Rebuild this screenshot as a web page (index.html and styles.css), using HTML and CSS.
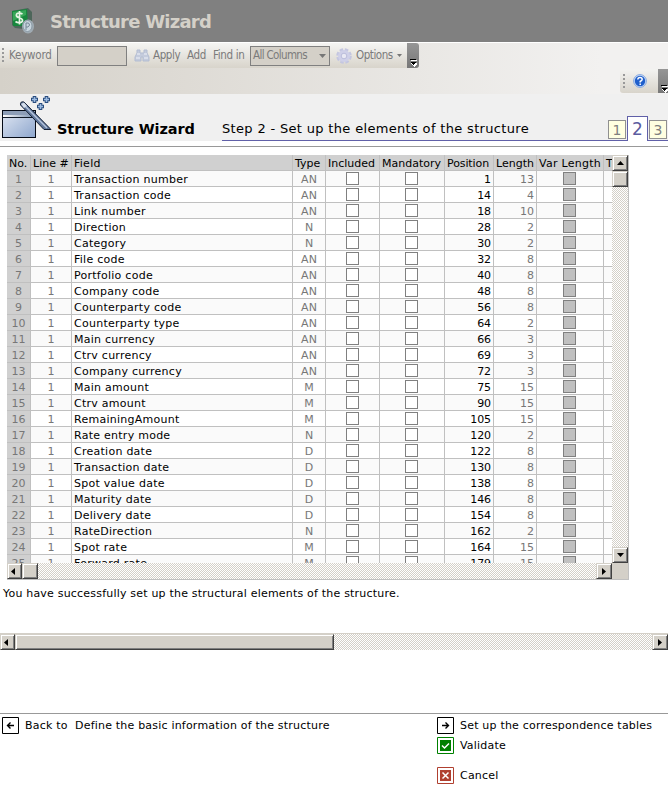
FILE: index.html
```html
<!DOCTYPE html>
<html lang="en">
<head>
<meta charset="utf-8">
<title>Structure Wizard</title>
<link rel="stylesheet" href="styles.css">
</head>
<body>
<header class="titlebar">
  <svg class="logo" width="24" height="27" viewBox="0 0 24 27">
    <path d="M1 3L17 0L21 4V22L4 20L1 17Z" fill="#4d665a"/>
    <path d="M1 3L16 1L17 18L2 18Z" fill="#17873d"/>
    <path d="M2 4L15 2L15 7L2 13Z" fill="#37a657"/>
    <path d="M11.500 6C8 4 4.500 5.500 5.500 8C6.500 10 11 9.500 11.500 12C12 15 7 15.500 4.500 13.500M8.500 3V16.500" fill="none" stroke="#e7f5e5" stroke-width="1.700"/>
    <ellipse cx="17" cy="18.500" rx="6" ry="7" fill="#9faab2"/>
    <ellipse cx="16.500" cy="18" rx="4.500" ry="5.500" fill="#c8d5de" stroke="#8b9aa6"/>
    <path d="M15 22V15H17.500Q20 17 17 19H15" fill="none" stroke="#758695"/>
  </svg>
  <h1>Structure Wizard</h1>
</header>
<div class="toolbars">
  <div class="toolbar">
    <i class="grip"></i>
    <span class="tt keyword">Keyword</span>
    <span class="input"></span>
    <svg class="binoculars" width="16" height="14" viewBox="0 0 16 14">
      <path d="M1 12V8L3 4V1H6V4H10V1H13V4L15 8V12H9V8H7V12Z" fill="#c4cbdc" stroke="#b3bdd2"/>
      <path d="M3 5H6M10 5H13M2 9H6M10 9H14" stroke="#eef1f8"/>
    </svg>
    <span class="tt apply">Apply</span>
    <span class="tt add">Add</span>
    <span class="tt find">Find in</span>
    <span class="select"><span class="tt allcols">All Columns</span><svg width="7" height="4"><path d="M0 0H7L3.500 4Z" fill="#777"/></svg></span>
    <svg class="gear" width="16" height="16" viewBox="0 0 16 16">
      <circle cx="8" cy="8" r="6.300" fill="none" stroke="#c4c6e0" stroke-width="3" stroke-dasharray="3.350 1.600"/>
      <circle cx="8" cy="8" r="6" fill="#cfd0e8"/><circle cx="8" cy="8" r="2.800" fill="#e9e9f3" stroke="#bbbddb"/>
    </svg>
    <span class="tt options">Options</span>
    <svg class="caret" width="5" height="3"><path d="M0 0H5L2.500 3Z" fill="#777"/></svg>
    <span class="handle"><svg width="7" height="8" shape-rendering="crispEdges"><path d="M1 1H7V2H1ZM1 4H7V5L4 8Z" fill="#fff"/><path d="M0 0H6V1H0ZM0 3H6L3 6Z" fill="#000"/></svg></span>
  </div>
  <div class="helpbar">
    <i class="grip"></i>
    <svg class="help" width="14" height="14" viewBox="0 0 14 14">
      <circle cx="7" cy="7" r="6.400" fill="#c9dbf5" stroke="#86a8df"/><circle cx="7" cy="7" r="5.200" fill="#1f5fcc"/>
      <path d="M4.800 5.500Q5 3.500 7 3.500Q9.200 3.500 9.200 5.300Q9.200 6.300 7.200 7.500V8.500M7.200 9.500V11" fill="none" stroke="#fff" stroke-width="1.500"/>
    </svg>
    <span class="handle"><svg width="7" height="8" shape-rendering="crispEdges"><path d="M1 1H7V2H1ZM1 4H7V5L4 8Z" fill="#fff"/><path d="M0 0H6V1H0ZM0 3H6L3 6Z" fill="#000"/></svg></span>
  </div>
</div>
<section class="wizard">
  <div class="brand">
    <svg class="wand" width="52" height="46" viewBox="0 0 52 46">
      <defs>
        <linearGradient id="box" x1="0" y1="0" x2="1" y2="1"><stop offset="0" stop-color="#e3e9f4"/><stop offset="1" stop-color="#8da6cd"/></linearGradient>
        <linearGradient id="lid"><stop offset="0" stop-color="#fff"/><stop offset="1" stop-color="#758dae"/></linearGradient>
      </defs>
      <rect x="2.500" y="16.500" width="33" height="27" fill="url(#box)" stroke="#050b16"/>
      <path d="M3 19H35" stroke="#8d9eb7" stroke-width="4"/>
      <rect x="3" y="21" width="32" height="3" fill="url(#lid)"/><path d="M3 23.500H35" stroke="#101a28"/>
      <path d="M20.500 11Q20 7 24 8L51 35.500H44Z" fill="#60779b" stroke="#142036"/>
      <path d="M23 10L47 34" stroke="#b6c5dd" stroke-width="1.500"/>
      <path d="M21 10L24 8.500L27 12L24 14Z" fill="#d6dfec"/>
      <g fill="none" stroke="#294c7e" stroke-width="3.600"><path d="M31 5.500H38M34.500 2V9M43 5.500H50M46.500 2V9M37 12.500H44M40.500 9V16"/></g>
      <g fill="none" stroke="#9cbbe2" stroke-width="1.600"><path d="M32 5.500H37M34.500 3V8M44 5.500H49M46.500 3V8M38 12.500H43M40.500 10V15"/></g>
    </svg>
    <h2>Structure Wizard</h2>
  </div>
  <div class="step">
    <span class="steptext">Step 2 - Set up the elements of the structure</span>
    <nav class="tabs"><a>1</a><a class="on">2</a><a>3</a></nav>
  </div>
</section>
<div class="rule"></div>
<section class="grid">
  <div class="view"><div class="rows" id="rows"></div></div>
  <div class="vbar"><b class="btn"><svg width="7" height="4"><path d="M3.500 0L7 4H0Z"/></svg></b><b class="btn"></b><i></i><b class="btn"><svg width="7" height="4"><path d="M0 0H7L3.500 4Z"/></svg></b></div>
  <div class="hbar"><b class="btn"><svg width="4" height="7"><path d="M4 0V7L0 3.500Z"/></svg></b><b class="btn"></b><i></i><b class="btn"><svg width="4" height="7"><path d="M0 0V7L4 3.500Z"/></svg></b></div>
  <div class="corner"></div>
</section>
<p class="message"><span>You have successfully set up the structural elements of the structure.</span></p>
<div class="hbar page"><b class="btn"><svg width="4" height="7"><path d="M4 0V7L0 3.500Z"/></svg></b><b class="btn long"></b><i></i><b class="btn"><svg width="4" height="7"><path d="M0 0V7L4 3.500Z"/></svg></b></div>
<footer>
  <div class="back action">
    <svg width="17" height="17"><path d="M.5 .5H16.500V16.500H.5Z" fill="#fff" stroke="#000"/><path d="M5.500 8.500H12M8.500 5.500L5.500 8.500L8.500 11.500" fill="none" stroke="#000" stroke-width="1.400"/></svg>
    <span>Back to&nbsp; Define the basic information of the structure</span>
  </div>
  <div class="next">
    <div class="action"><svg width="17" height="17"><path d="M.5 .5H16.500V16.500H.5Z" fill="#fff" stroke="#000"/><path d="M5 8.500H11.500M8.500 5.500L11.500 8.500L8.500 11.500" fill="none" stroke="#000" stroke-width="1.400"/></svg><span>Set up the correspondence tables</span></div>
    <div class="action"><svg width="17" height="17"><path d="M.5 .5H16.500V16.500H.5Z" fill="#fff" stroke="#008000"/><path d="M3 3H14V14H3Z" fill="#008000"/><path d="M5 8.500L7.500 11L12 6.500" fill="none" stroke="#fff" stroke-width="1.500"/></svg><span>Validate</span></div>
    <div class="action cancel"><svg width="17" height="17"><path d="M.5 .5H16.500V16.500H.5Z" fill="#fff" stroke="#b04030"/><path d="M3 3H14V14H3Z" fill="#b04030"/><path d="M5.500 5.500L11.500 11.500M11.500 5.500L5.500 11.500" stroke="#fff" stroke-width="1.500"/></svg><span>Cancel</span></div>
  </div>
</footer>
<script src="script.js"></script>
</body>
</html>
```
FILE: styles.css
```css
* { box-sizing: border-box; }
body { margin: 0; width: 668px; height: 801px; overflow: hidden; background: #fff; color: #000; font: 11px/15px "DejaVu Sans", Verdana, sans-serif; }
svg { display: block; flex: none; }
h1, h2, p { margin: 0; }
span { white-space: nowrap; }
.titlebar { height: 42px; background: #808080; display: flex; align-items: center; }
.logo { margin: 0 0 0 11px; }
h1 { margin: 1px 0 0 15px; font: bold 18px/24px "DejaVu Sans", sans-serif; letter-spacing: -0.75px; color: #d4d0c8; }
.toolbars { height: 52px; background: linear-gradient(90deg, #d5d1c9, #f2f1f0 90%); display: flex; justify-content: space-between; align-items: flex-start; border-top: 1px solid #fff; }
.toolbar { width: 419px; height: 25px; display: flex; align-items: center; background: linear-gradient(#f5f5f3, #d8d4cb); border-radius: 0 3px 3px 0; color: #7b7b7b; overflow: hidden; }
.grip { width: 2px; height: 15px; margin-left: 2px; flex: none; background: repeating-linear-gradient(#999 0 2px, transparent 2px 4px); }
.tt { font: 11.5px/16px "DejaVu Sans Condensed", "DejaVu Sans", sans-serif; flex: none; margin-bottom: 1px; }
.keyword { margin-left: 5px; width: 48px; letter-spacing: -0.2px; }
.input { width: 70px; height: 20px; border: 1px solid #808080; background: #d4d0c8; flex: none; }
.binoculars { margin-left: 7px; }
.apply { margin-left: 3px; width: 34px; letter-spacing: -.4px; }
.add { width: 26px; letter-spacing: -.4px; }
.find { width: 37px; letter-spacing: -.35px; }
.select { width: 80px; height: 20px; border: 1px solid #808080; background: #d4d0c8; display: flex; align-items: center; justify-content: space-between; padding: 0 3px 0 2px; flex: none; }
.allcols { letter-spacing: -.65px; }
.gear { margin-left: 6px; }
.options { margin-left: 4px; width: 41px; letter-spacing: -.45px; }
.handle { width: 12px; height: 25px; background: linear-gradient(#969696, #777); display: flex; align-items: flex-end; justify-content: center; padding: 0 0 1px 1px; margin-left: auto; flex: none; }
.helpbar { width: 48px; height: 24px; margin-top: 26px; background: linear-gradient(#f3f3f1, #d8d4cb); border-radius: 3px 0 0 3px; display: flex; align-items: center; overflow: hidden; }
.helpbar .grip { margin-left: 3px; }
.help { margin-left: 8px; }
.helpbar .handle { width: 10px; justify-content: flex-end; }
.wizard { height: 47px; background: #f0f0f0; display: flex; }
.brand { width: 222px; display: flex; align-items: flex-start; }
h2 { margin: 26px 0 0 5px; font: bold 14.500px/18px "DejaVu Sans", sans-serif; letter-spacing: -0.1px; white-space: nowrap; }
.step { flex: 1; display: flex; justify-content: space-between; border-bottom: 1px solid #6060a8; }
.steptext { margin-top: 26px; font-size: 13px; line-height: 18px; letter-spacing: .33px; }
.tabs { display: flex; align-items: flex-end; margin: 0 1px -1px 0; }
.tabs a { width: 18px; height: 19px; border: 1px solid #909090; background: #ffffe1; margin: 0 1px 2px 0; color: #808080; font-size: 14px; line-height: 18px; text-align: center; }
.tabs a:last-child { margin: 0 0 2px 1px; }
.tabs a.on { width: 21px; height: 25px; margin: 0; border: 1px solid #6060a8; border-bottom: 0; background: #fff; color: #5c5ca0; font-size: 17px; line-height: 25px; }
.rule { height: 6px; border-bottom: 1px solid #999; }
.grid { margin: 8px 0 0 7px; width: 622px; height: 425px; display: grid; grid-template: 408px 16px / 605px 16px; border: solid #c0c0c0; border-width: 0 1px 1px 0; }
.view { overflow: hidden; }
.row { width: 670px; height: 16px; display: grid; grid-template-columns: 24px 41px 221px 33px 54px 65px 49px 43px 67px 73px; background: #fff; color: #777; }
.row:nth-child(even) { background: #fafafa; }
.row > span { border: solid #c0c0c0; border-width: 0 1px 1px 0; line-height: 17px; text-align: center; overflow: hidden; }
.row .no { background: #d0d0d0; }
.row .field { text-align: left; padding-left: 2px; color: #000; letter-spacing: .26px; }
.row .pos { text-align: right; padding-right: 2px; color: #000; letter-spacing: -.1px; }
.row .len { text-align: right; padding-right: 2px; }
.row.head, .row.head .no { background: #d0d0d0; color: #000; }
.row.head > span { text-align: left; padding: 0 0 0 2px; }
.row.head .var { letter-spacing: .27px; }
.box { display: block; width: 13px; height: 13px; margin: 1px auto 0; border: 1px solid #808080; background: #fff; }
.man .box { margin-left: 25px; }
.var .box { margin-left: 26px; }
.shade { background: #c0c0c0; }
.vbar, .hbar { display: flex; background: repeating-conic-gradient(#d4d0c8 0 25%, #fff 0 50%) 0 0 / 2px 2px; }
.vbar { flex-direction: column; }
.vbar i, .hbar i { flex: 1; }
.btn { flex: none; width: 16px; height: 16px; display: flex; align-items: center; justify-content: center; background: #d4d0c8; border: 1px solid; border-color: #d4d0c8 #404040 #404040 #d4d0c8; box-shadow: inset 1px 1px #fff, inset -1px -1px #808080; }
.hbar .btn { width: 15px; padding-right: 3px; }
.hbar .btn + .btn { width: 16px; }
.hbar .btn:last-child { width: 16px; padding-right: 0; }
.corner { background: #d4d0c8; }
.message { height: 15px; margin-top: 6px; padding-left: 3px; letter-spacing: .2px; }
.page { height: 17px; margin-top: 32px; border-top: 1px solid #d4d0c8; }
.page .btn.long { width: 319px; }
footer { margin-top: 63px; border-top: 1px solid #999; height: 88px; padding-top: 3px; display: flex; }
.back { width: 437px; padding-left: 2px; }
.action { display: flex; gap: 6px; height: 20px; align-items: flex-start; line-height: 17px; letter-spacing: .2px; }
.cancel { margin-top: 10px; }
```
FILE: script.js
```js
const fields = `Transaction number|AN|1|13
Transaction code|AN|14|4
Link number|AN|18|10
Direction|N|28|2
Category|N|30|2
File code|AN|32|8
Portfolio code|AN|40|8
Company code|AN|48|8
Counterparty code|AN|56|8
Counterparty type|AN|64|2
Main currency|AN|66|3
Ctrv currency|AN|69|3
Company currency|AN|72|3
Main amount|M|75|15
Ctrv amount|M|90|15
RemainingAmount|M|105|15
Rate entry mode|N|120|2
Creation date|D|122|8
Transaction date|D|130|8
Spot value date|D|138|8
Maturity date|D|146|8
Delivery date|D|154|8
RateDirection|N|162|2
Spot rate|M|164|15
Forward rate|M|179|15`.split('\n');

const box = '<i class="box"></i>';
const shaded = '<i class="box shade"></i>';

function row(cells, head) {
  const names = ['no', 'line', 'field', 'type', 'inc', 'man', 'pos', 'len', 'var', 'more'];
  const html = cells.map((c, i) => `<span class="${names[i]}">${c}</span>`).join('');
  return `<div class="row${head ? ' head' : ''}">${html}</div>`;
}

document.getElementById('rows').innerHTML =
  row(['No.', 'Line #', 'Field', 'Type', 'Included', 'Mandatory', 'Position', 'Length', 'Var Length', 'T'], true) +
  fields.map((f, i) => {
    const [name, type, pos, len] = f.split('|');
    return row([i + 1, 1, name, type, box, box, pos, len, shaded, '']);
  }).join('');
```
